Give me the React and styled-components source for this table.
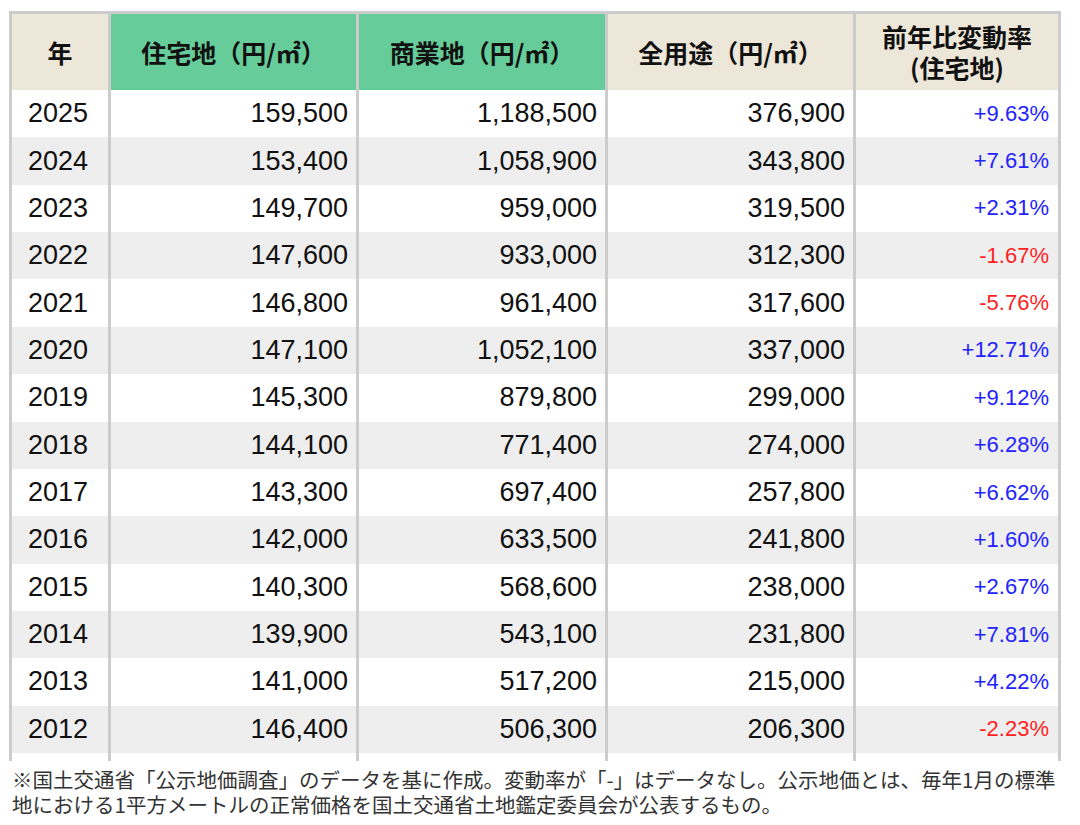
import React from 'react';
import styled, { createGlobalStyle } from 'styled-components';

const GlobalStyle = createGlobalStyle`
    body {
        margin: 0;
        background: #fff;
        font-family: "Liberation Sans", "Noto Sans CJK JP", sans-serif;
        color: #111;
    }
`;

const Page = styled.div`
    padding: 11px 0 0 9px;
    width: 1052px;
`;

const Table = styled.table`
    width: 1052px;
    table-layout: fixed;
    border-collapse: collapse;
    border: 3px solid #ccc;
    border-bottom: none;
`;

const HeadCell = styled.th`
    height: 76px;
    padding: 0 4px;
    background: ${props => props.green ? '#66cc99' : '#ede7d9'};
    border-left: 3px solid #ccc;
    border-right: 3px solid #ccc;
    font-family: "Noto Sans CJK JP", sans-serif;
    font-size: 25px;
    font-weight: 700;
    line-height: 31px;
    text-align: center;
    vertical-align: middle;
    color: #111;
`;

const Row = styled.tr`
    height: 47.36px;
    background: ${props => props.striped ? '#eeeeee' : '#fff'};
`;

const TailRow = styled.tr`
    height: 8px;
    background: #fff;
`;

const Cell = styled.td`
    padding: ${props => props.year ? '0 0 0 16px' : '0 8px 0 0'};
    border-left: 3px solid #ccc;
    border-right: 3px solid #ccc;
    font-size: 27px;
    text-align: ${props => props.year ? 'left' : 'right'};
    vertical-align: middle;
    white-space: nowrap;
`;

const RateCell = styled(Cell)`
    padding-right: 9px;
    font-size: 22px;
    color: ${props => props.down ? '#ff1f1f' : '#2222ff'};
`;

const Note = styled.p`
    margin: 6px 0 0 3px;
    font-family: "Noto Sans CJK JP", sans-serif;
    font-size: 20.5px;
    line-height: 25px;
    color: #333;
`;

const rows = [
    ['2025', '159,500', '1,188,500', '376,900', '+9.63%'],
    ['2024', '153,400', '1,058,900', '343,800', '+7.61%'],
    ['2023', '149,700', '959,000', '319,500', '+2.31%'],
    ['2022', '147,600', '933,000', '312,300', '-1.67%'],
    ['2021', '146,800', '961,400', '317,600', '-5.76%'],
    ['2020', '147,100', '1,052,100', '337,000', '+12.71%'],
    ['2019', '145,300', '879,800', '299,000', '+9.12%'],
    ['2018', '144,100', '771,400', '274,000', '+6.28%'],
    ['2017', '143,300', '697,400', '257,800', '+6.62%'],
    ['2016', '142,000', '633,500', '241,800', '+1.60%'],
    ['2015', '140,300', '568,600', '238,000', '+2.67%'],
    ['2014', '139,900', '543,100', '231,800', '+7.81%'],
    ['2013', '141,000', '517,200', '215,000', '+4.22%'],
    ['2012', '146,400', '506,300', '206,300', '-2.23%'],
];

export default function App() {
    return (
        <Page>
            <GlobalStyle />
            <Table>
                <colgroup>
                    <col style={{width: '99px'}} />
                    <col style={{width: '248px'}} />
                    <col style={{width: '249px'}} />
                    <col style={{width: '248px'}} />
                    <col style={{width: '205px'}} />
                </colgroup>
                <thead>
                    <tr>
                        <HeadCell>年</HeadCell>
                        <HeadCell green>住宅地（円/㎡）</HeadCell>
                        <HeadCell green>商業地（円/㎡）</HeadCell>
                        <HeadCell>全用途（円/㎡）</HeadCell>
                        <HeadCell>前年比変動率<br />(住宅地)</HeadCell>
                    </tr>
                </thead>
                <tbody>
                    {rows.map((r, i) => (
                        <Row key={r[0]} striped={i % 2 === 1}>
                            <Cell year>{r[0]}</Cell>
                            <Cell>{r[1]}</Cell>
                            <Cell>{r[2]}</Cell>
                            <Cell>{r[3]}</Cell>
                            <RateCell down={r[4].startsWith('-')}>{r[4]}</RateCell>
                        </Row>
                    ))}
                    <TailRow>
                        <Cell year />
                        <Cell />
                        <Cell />
                        <Cell />
                        <Cell />
                    </TailRow>
                </tbody>
            </Table>
            <Note>
                ※国土交通省「公示地価調査」のデータを基に作成。変動率が「-」はデータなし。公示地価とは、毎年1月の標準地における1平方メートルの正常価格を国土交通省土地鑑定委員会が公表するもの。
            </Note>
        </Page>
    );
}
